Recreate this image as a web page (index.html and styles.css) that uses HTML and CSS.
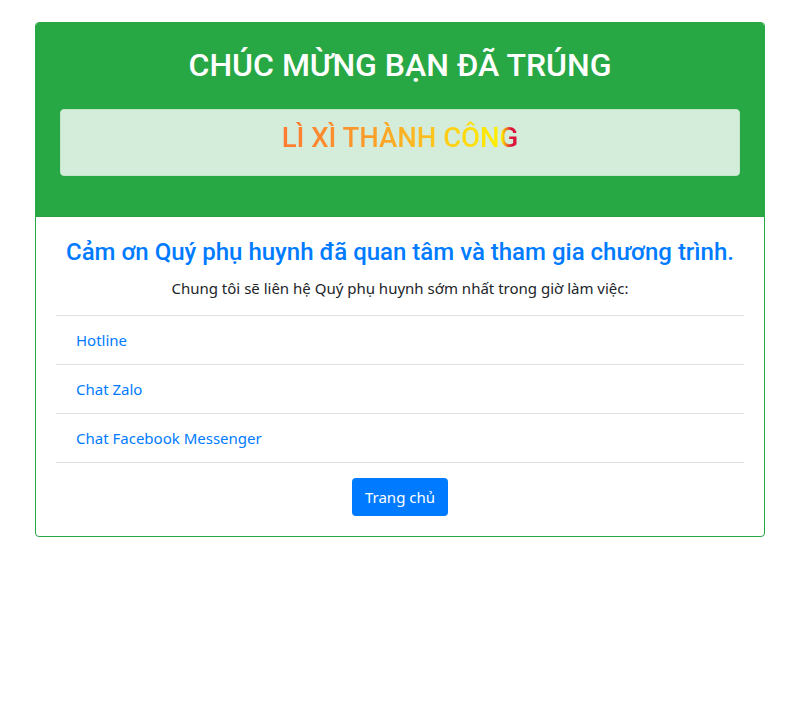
FILE: index.html
```html
<!DOCTYPE html>
<html lang="vi">
<head>
<meta charset="utf-8">
<title>Chúc mừng</title>
<link rel="stylesheet" href="styles.css">
</head>
<body>
<div class="page">
  <div class="card">
    <div class="card-header">
      <h1 class="title">CHÚC MỪNG BẠN ĐÃ TRÚNG</h1>
      <div class="alert">
        <h4 class="alert-text"><span class="grad">LÌ XÌ THÀNH CÔNG</span></h4>
      </div>
    </div>
    <div class="card-body">
      <h3 class="thanks">Cảm ơn Quý phụ huynh đã quan tâm và tham gia chương trình.</h3>
      <p class="lead">Chung tôi sẽ liên hệ Quý phụ huynh sớm nhất trong giờ làm việc:</p>
      <ul class="list">
        <li class="item"><a href="#" class="link">Hotline</a></li>
        <li class="item"><a href="#" class="link">Chat Zalo</a></li>
        <li class="item"><a href="#" class="link">Chat Facebook Messenger</a></li>
      </ul>
      <div class="actions">
        <a href="#" class="btn">Trang chủ</a>
      </div>
    </div>
  </div>
</div>
</body>
</html>
```

FILE: styles.css
```css
* { box-sizing: border-box; }
html, body { margin: 0; padding: 0; background: #fff; }
body {
  font-family: "Noto Sans", "Open Sans", sans-serif;
  font-size: 15px;
  color: #212529;
}
.page {
  padding: 22px 44px 0 35px;
}
.card {
  border: 1px solid #28a745;
  border-radius: 4px;
  overflow: hidden;
}
.card-header {
  background: #28a745;
  padding: 23px 24px 40px 24px;
  border-bottom: 1px solid rgba(0,0,0,0.03);
}
.title {
  margin: 0;
  font-family: Roboto, sans-serif;
  font-weight: 500;
  font-size: 32px;
  line-height: 38px;
  color: #fff;
  text-align: center;
}
.alert {
  margin-top: 25px;
  background: #d4edda;
  border: 1px solid #c3e6cb;
  border-radius: 4px;
  padding: 11px 20px 20px;
  text-align: center;
}
.alert-text {
  margin: 0;
  font-family: Roboto, sans-serif;
  font-weight: 500;
  font-size: 27.5px;
  line-height: 34px;
}
.grad {
  display: inline-block;
  background: linear-gradient(90deg, #fd7a32 0%, #fb9a2a 35%, #fcc11e 62%, #fff000 93%, #dc143c 97%, #dc143c 100%);
  -webkit-background-clip: text;
  background-clip: text;
  color: transparent;
}
.card-body {
  padding: 20px 20px 20px;
  text-align: center;
}
.thanks {
  margin: 0;
  font-family: Roboto, sans-serif;
  font-weight: 500;
  font-size: 24px;
  line-height: 30px;
  color: #007bff;
}
.lead {
  margin: 10px 0 16px;
  line-height: 22px;
}
.list {
  list-style: none;
  margin: 0;
  padding: 0;
  border-top: 1px solid #dee2e6;
  text-align: left;
}
.item {
  padding: 12px 20px;
  line-height: 24px;
  border-bottom: 1px solid #dee2e6;
}
.link {
  color: #007bff;
  text-decoration: none;
}
.actions {
  margin-top: 15px;
}
.btn {
  display: inline-block;
  background: #007bff;
  color: #fff;
  text-decoration: none;
  border-radius: 4px;
  padding: 7px 13px;
  line-height: 24px;
}
```
